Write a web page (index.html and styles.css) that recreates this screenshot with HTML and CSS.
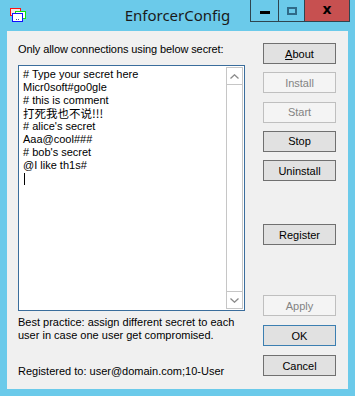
FILE: index.html
```html
<!DOCTYPE html>
<html>
<head>
	<title>EnforcerConfig</title>
	<link rel="stylesheet" href="styles.css">
</head>

<body>
	<div class="window">
		<div class="titlebar">
			<svg class="appIcon" width="16" height="14" viewBox="0 0 16 14">
				<rect x="0.5" y="0.5" width="10" height="7" fill="#f4e6e6" stroke="#ff1010"/>
				<rect x="5.5" y="3.5" width="10" height="7" fill="#ffffff" stroke="#10e010"/>
				<rect x="2.5" y="5.5" width="10" height="8" fill="#ffffff" stroke="#1010ff"/>
				<rect x="6" y="11" width="1" height="1" fill="#5050a0"/>
				<rect x="8" y="11" width="1" height="1" fill="#5050a0"/>
			</svg>
			<div class="title">EnforcerConfig</div>
			<div class="controls">
				<span class="ctl minBtn"><i></i></span>
				<span class="ctl maxBtn"><i></i></span>
				<span class="ctl closeBtn">x</span>
			</div>
		</div>

		<div class="client">
			<div class="main">
				<div class="label">Only allow connections using below secret:</div>

				<div class="editor">
					<div class="lines">
						<div># Type your secret here</div>
						<div>Micr0soft#go0gle</div>
						<div># this is comment</div>
						<div class="cjk">打死我也不说!!!</div>
						<div># alice's secret</div>
						<div>Aaa@cool###</div>
						<div># bob's secret</div>
						<div>@I like th1s#</div>
						<div><span class="caret"></span></div>
					</div>
					<div class="scrollbar">
						<div class="arrow">
							<svg width="9" height="5" viewBox="0 0 9 5"><path d="M0.5 4.5 L4.5 0.8 L8.5 4.5" fill="none" stroke="#8a8a8a" stroke-width="1.3"/></svg>
						</div>
						<div class="track"></div>
						<div class="arrow">
							<svg width="9" height="5" viewBox="0 0 9 5"><path d="M0.5 0.5 L4.5 4.2 L8.5 0.5" fill="none" stroke="#8a8a8a" stroke-width="1.3"/></svg>
						</div>
					</div>
				</div>

				<p class="hint">Best practice: assign different secret to each<br>user in case one user get compromised.</p>
				<p class="registered">Registered to: user@domain.com;10-User</p>
			</div>

			<div class="side">
				<div class="group">
					<button><u>A</u>bout</button>
					<button disabled>Install</button>
					<button disabled>Start</button>
					<button>Stop</button>
					<button>Uninstall</button>
				</div>
				<button class="register">Register</button>
				<div class="group bottom">
					<button disabled>Apply</button>
					<button class="default">OK</button>
					<button>Cancel</button>
				</div>
			</div>
		</div>
	</div>
</body>
</html>
```

FILE: styles.css
```css
		body {
			margin: 0;
			background: #6bcaea;
			font-family: "Liberation Sans", Arial, sans-serif;
			font-size: 11px;
			color: #000;
		}

		.window {
			width: 355px;
			height: 396px;
			display: flex;
			flex-direction: column;
		}

		.titlebar {
			height: 31px;
			flex-shrink: 0;
			display: grid;
			grid-template-columns: 1fr auto 1fr;
			align-items: start;
		}

		.appIcon {
			margin: 8px 0 0 10px;
		}

		.title {
			font-family: "Noto Sans", "Open Sans", sans-serif;
			font-size: 15px;
			color: #1a1a1a;
			line-height: 20px;
			padding-top: 5px;
		}

		.controls {
			display: flex;
			justify-self: end;
			margin-right: 5px;
		}

		.ctl {
			height: 21px;
			border: 1px solid #2e4550;
			border-top: 0;
			margin-left: -1px;
			display: flex;
			align-items: center;
			justify-content: center;
		}

		.minBtn {
			width: 27px;
		}

		.minBtn i {
			width: 10px;
			height: 3px;
			background: #000;
			margin-top: 4px;
		}

		.maxBtn {
			width: 25px;
		}

		.maxBtn i {
			width: 6px;
			height: 4px;
			border: 2px solid #2f6a88;
			margin-top: 1px;
		}

		.closeBtn {
			width: 46px;
			background: #c75050;
			font: bold 14px "DejaVu Sans", sans-serif;
			line-height: 14px;
			color: #000;
			padding-bottom: 3px;
			box-sizing: border-box;
			height: 22px;
		}

		.client {
			flex: 1;
			min-height: 0;
			margin: 0 7px 7px;
			background: #f0f0f0;
			display: flex;
			padding: 12px 12px 0 11px;
		}

		.main {
			width: 227px;
		}

		.label {
			line-height: 13px;
			margin-bottom: 9px;
			letter-spacing: -0.1px;
		}

		.editor {
			height: 246px;
			box-sizing: border-box;
			border: 1px solid #3a6d9c;
			background: #fff;
			display: flex;
		}

		.lines {
			flex: 1;
			padding: 2px 0 0 4px;
			line-height: 13px;
		}

		.cjk {
			font-family: "Noto Sans CJK SC", sans-serif;
			font-size: 11.5px;
			line-height: 13px;
			height: 13px;
		}

		.caret {
			display: inline-block;
			width: 1px;
			height: 12px;
			background: #000;
			vertical-align: top;
			margin: 1px 0 0 1px;
		}

		.scrollbar {
			width: 17px;
			margin: 1px 1px 1px 0;
			box-sizing: border-box;
			border-left: 1px solid #c6c6c6;
			border-right: 1px solid #c6c6c6;
			display: flex;
			flex-direction: column;
		}

		.arrow {
			height: 16px;
			border-top: 1px solid #c6c6c6;
			border-bottom: 1px solid #c6c6c6;
			display: flex;
			align-items: center;
			justify-content: center;
		}

		.track {
			flex: 1;
		}

		.hint {
			margin: 5px 0 0;
			line-height: 13px;
		}

		.registered {
			margin: 23px 0 0;
			line-height: 13px;
		}

		.side {
			margin-left: 18px;
			padding-bottom: 13px;
			display: flex;
			flex-direction: column;
		}

		.group {
			display: flex;
			flex-direction: column;
			gap: 8.3px;
		}

		.register {
			margin-top: 43px;
		}

		.bottom {
			margin-top: auto;
			gap: 9px;
		}

		button {
			width: 73px;
			height: 21px;
			padding: 0;
			border: 1px solid #707070;
			background: #e1e1e1;
			font-family: "Liberation Sans", Arial, sans-serif;
			font-size: 11px;
			color: #000;
		}

		button u {
			text-decoration-thickness: 1px;
			text-underline-offset: 1px;
		}

		button:disabled {
			background: #f4f4f4;
			border-color: #bfbfbf;
			color: #838383;
		}

		.default {
			border-color: #3c7fb1;
		}
```
